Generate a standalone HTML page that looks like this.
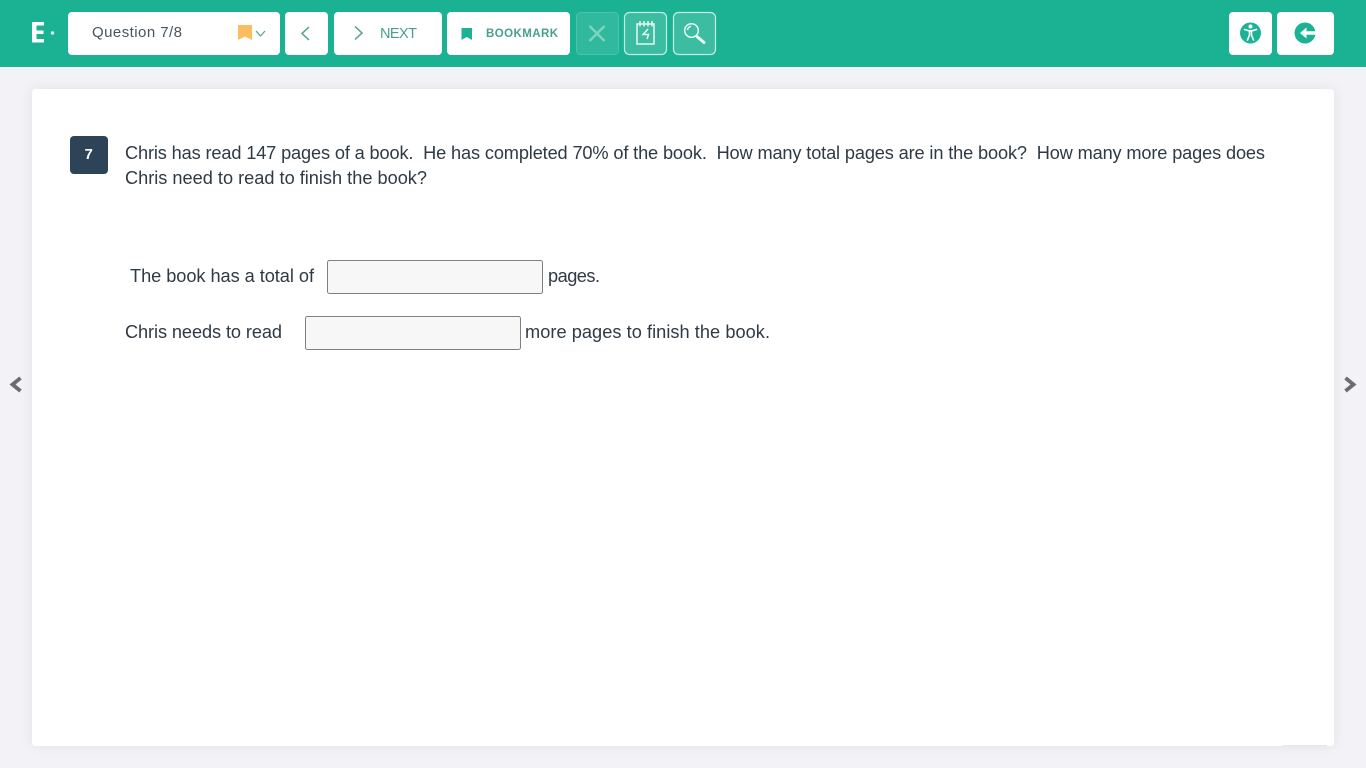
<!DOCTYPE html>
<html lang="en">
<head>
<meta charset="utf-8">
<title>Question 7/8</title>
<style>
html,body{margin:0;padding:0;width:1366px;height:768px;overflow:hidden;background:#f3f3f7}
svg{display:block;position:absolute;left:0;top:0}
text{font-family:"Liberation Sans",sans-serif;white-space:pre}
.q{font-size:18.200px;fill:#2f3a45}
.g{fill:none;stroke:#4f9f90;stroke-width:1.500}
.w{fill:none;stroke:#e8f7f3;stroke-width:1.500}
</style>
</head>
<body>
<svg width="1366" height="768" viewBox="0 0 1366 768" xmlns="http://www.w3.org/2000/svg">
<defs>
<filter id="s" x="-5%" y="-5%" width="110%" height="110%"><feDropShadow dx="0" dy="0" stdDeviation="6" flood-color="#000" flood-opacity=".07"/></filter>
</defs>
<rect x="0" y="0" width="1366" height="67" fill="#1ab293"/>
<rect x="32" y="89" width="1302" height="657" rx="4" fill="#fff" filter="url(#s)"/>
<rect x="1283" y="745" width="44" height="1" fill="#e6e6ea"/>

<!-- logo -->
<path d="M32 22h12v3.500h-7.500v5h7v3.500h-7v5h7.500v3.500h-12z" fill="#fff"/>
<circle cx="52.500" cy="33" r="1.700" fill="#d8f3ec"/>

<!-- question dropdown -->
<rect x="68" y="12" width="212" height="43" rx="4" fill="#fff"/>
<text x="92" y="37" font-size="15" fill="#4a5460" textLength="90" lengthAdjust="spacing">Question 7/8</text>
<path d="M238 25h14v15l-7-3.500-7 3.500z" fill="#fbbd5e"/>
<path d="M256 31l4.500 5 4.500-5" fill="none" stroke="#4f9f90" stroke-width="1.200"/>

<!-- prev -->
<rect x="285" y="12" width="43" height="43" rx="4" fill="#fff"/>
<path d="M309 27l-7 6.500 7 6.500" class="g"/>

<!-- next -->
<rect x="334" y="12" width="108" height="43" rx="4" fill="#fff"/>
<path d="M355 26.500l7 6.500-7 6.500" class="g"/>
<text x="380" y="38" font-size="14.500" fill="#47a08f" textLength="37" lengthAdjust="spacing">NEXT</text>

<!-- bookmark -->
<rect x="447" y="12" width="123" height="43" rx="4" fill="#fff"/>
<path d="M461.500 28h10.500v12l-5.250-3-5.250 3z" fill="#1bb394"/>
<text x="486" y="37" font-size="11.500" fill="#47a08f" font-weight="700" textLength="72" lengthAdjust="spacing">BOOKMARK</text>

<!-- close (disabled) -->
<rect x="576.500" y="12.500" width="42" height="42" rx="4" fill="#31b99d" stroke="#4cc2a9"/>
<path d="M589.500 26l15 15M604.500 26l-15 15" fill="none" stroke="#7fd3c0" stroke-width="2.400"/>

<!-- notes -->
<rect x="624.500" y="12.500" width="42" height="42" rx="5" fill="#3cbda2" stroke="#c4ece2" stroke-width="1.200"/>
<path d="M637 24h17v20h-17z" class="w"/>
<path d="M640 21v5.500M644 21v5.500M648 21v5.500M652 21v5.500" class="w" stroke-width="1.200"/>
<path d="M648 29l-5 5.500h5.500l-1.500 4.500" class="w" stroke-width="1.300"/>

<!-- search -->
<rect x="673.500" y="12.500" width="42" height="42" rx="5" fill="#3cbda2" stroke="#c4ece2" stroke-width="1.200"/>
<circle cx="691.500" cy="30.500" r="6.800" class="w" stroke-width="1.500"/>
<path d="M687.500 30a4.500 4.500 0 0 1 3.500-3.700" class="w" stroke-width="1"/>
<path d="M697.500 37l6.500 5.500" fill="none" stroke="#e8f7f3" stroke-width="3" stroke-linecap="round"/>

<!-- accessibility -->
<rect x="1229" y="12" width="43" height="43" rx="4" fill="#fff"/>
<circle cx="1250.500" cy="33" r="10.500" fill="#1bb394"/>
<circle cx="1250.500" cy="26.500" r="2" fill="#fff"/>
<path d="M1244.500 29.500l4.500 1.300h3l4.500-1.300M1249.500 31v4l-2 5M1251.500 31v4l2 5" fill="none" stroke="#fff" stroke-width="1.600" stroke-linecap="round"/>

<!-- exit -->
<rect x="1277" y="12" width="57" height="43" rx="4" fill="#fff"/>
<circle cx="1305" cy="33" r="10.500" fill="#1bb394"/>
<path d="M1316 31.200h-9.500v-3.700l-6.500 5.500 6.500 5.500v-3.700h9.500z" fill="#fff"/>

<!-- question badge -->
<rect x="70" y="136" width="38" height="38" rx="4" fill="#2c4358"/>
<text x="84.500" y="159" font-size="15" font-weight="700" fill="#fff">7</text>

<!-- question text -->
<text class="q" x="125" y="159" textLength="1140" lengthAdjust="spacing">Chris has read 147 pages of a book.  He has completed 70% of the book.  How many total pages are in the book?  How many more pages does</text>
<text class="q" x="125" y="184" textLength="302" lengthAdjust="spacing">Chris need to read to finish the book?</text>

<text class="q" x="130" y="282" textLength="184" lengthAdjust="spacing">The book has a total of</text>
<rect x="327.500" y="260.500" width="215" height="33" rx="2" fill="#f7f7f7" stroke="#808080"/>
<text class="q" x="548" y="282" textLength="52" lengthAdjust="spacing">pages.</text>

<text class="q" x="125" y="338" textLength="157" lengthAdjust="spacing">Chris needs to read</text>
<rect x="305.500" y="316.500" width="215" height="33" rx="2" fill="#f7f7f7" stroke="#808080"/>
<text class="q" x="525" y="338" textLength="245" lengthAdjust="spacing">more pages to finish the book.</text>

<!-- side arrows -->
<path d="M20.500 378l-8 6.500 8 6.500" fill="none" stroke="#6d6d6d" stroke-width="3.800"/>
<path d="M1345.500 378l8 6.500-8 6.500" fill="none" stroke="#6d6d6d" stroke-width="3.800"/>
</svg>
</body>
</html>
